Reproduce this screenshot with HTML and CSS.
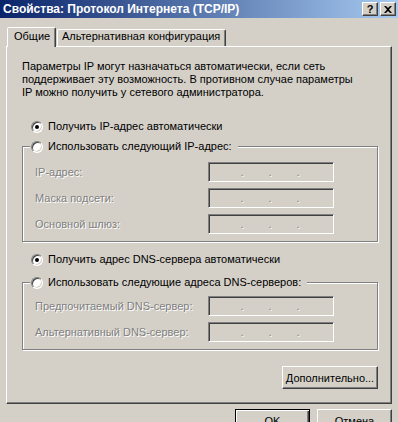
FILE: index.html
```html
<!DOCTYPE html>
<html lang="ru">

<head>
    <meta charset="UTF-8">
    <meta name="viewport" content="width=device-width, initial-scale=1.0">
    <title>Свойства: Протокол Интернета (TCP/IP)</title>
    <link rel="stylesheet" href="styles.css">
</head>

<body>
    <div class="window">
        <div class="titlebar">
            <span class="title">Свойства: Протокол Интернета (TCP/IP)</span>
            <div class="caption-buttons">
                <span class="caption-btn">?</span>
                <span class="caption-btn">
                    <svg width="8" height="7" viewBox="0 0 8 7">
                        <path d="M0 0h2l2 2 2-2h2L5 3.5 8 7H6L4 5 2 7H0l3-3.5z" fill="#000"/>
                    </svg>
                </span>
            </div>
        </div>

        <div class="dialog">
            <div class="tabs">
                <div class="tab active">Общие</div>
                <div class="tab second">Альтернативная конфигурация</div>
            </div>

            <div class="panel">
                <p class="intro">Параметры IP могут назначаться автоматически, если сеть<br>поддерживает эту возможность. В противном случае параметры<br>IP можно получить у сетевого администратора.</p>

                <div class="option first"><span class="radio checked"></span>Получить IP-адрес автоматически</div>

                <fieldset class="group ip-group">
                    <legend class="option"><span class="radio"></span>Использовать следующий IP-адрес:</legend>
                    <div class="fields">
                        <span class="label">IP-адрес:</span>
                        <div class="ip"><span class="dot">.</span><span class="dot">.</span><span class="dot">.</span></div>
                        <span class="label">Маска подсети:</span>
                        <div class="ip"><span class="dot">.</span><span class="dot">.</span><span class="dot">.</span></div>
                        <span class="label">Основной шлюз:</span>
                        <div class="ip"><span class="dot">.</span><span class="dot">.</span><span class="dot">.</span></div>
                    </div>
                </fieldset>

                <div class="option dns-auto"><span class="radio checked"></span>Получить адрес DNS-сервера автоматически</div>

                <fieldset class="group dns-group">
                    <legend class="option"><span class="radio"></span>Использовать следующие адреса DNS-серверов:</legend>
                    <div class="fields">
                        <span class="label">Предпочитаемый DNS-сервер:</span>
                        <div class="ip"><span class="dot">.</span><span class="dot">.</span><span class="dot">.</span></div>
                        <span class="label">Альтернативный DNS-сервер:</span>
                        <div class="ip"><span class="dot">.</span><span class="dot">.</span><span class="dot">.</span></div>
                    </div>
                </fieldset>

                <div class="advanced">
                    <button class="btn wide">Дополнительно...</button>
                </div>
            </div>

            <div class="dialog-buttons">
                <button class="btn default">OK</button>
                <button class="btn">Отмена</button>
            </div>
        </div>
    </div>
</body>

</html>
```

FILE: styles.css
```css
body {
    margin: 0;
    background-color: #d4d0c8;
    font-family: "Liberation Sans", Arial, sans-serif;
    font-size: 11px;
    color: #000;
}

.window {
    width: 398px;
    height: 422px;
    overflow: hidden;
}

/* заголовок окна */
.titlebar {
    height: 18px;
    display: flex;
    align-items: center;
    justify-content: space-between;
    padding: 0 2px 0 3px;
    background: linear-gradient(to right, #0a246a, #a6caf0);
}

.title {
    color: #fff;
    font-weight: bold;
    font-size: 12px;
}

.caption-buttons {
    display: flex;
    gap: 2px;
}

.caption-btn {
    width: 16px;
    height: 14px;
    box-sizing: border-box;
    display: flex;
    align-items: center;
    justify-content: center;
    background: #d4d0c8;
    border: 1px solid;
    border-color: #fff #404040 #404040 #fff;
    box-shadow: inset -1px -1px #808080;
    font-weight: bold;
    line-height: 12px;
}

.dialog {
    padding: 9px 6px 0;
}

/* вкладки */
.tabs {
    display: flex;
    align-items: flex-end;
    height: 19px;
    padding-left: 1px;
}

.tab {
    height: 16px;
    box-sizing: border-box;
    border: 1px solid;
    border-bottom: none;
    border-color: #fff #404040 transparent #fff;
    border-radius: 2px 2px 0 0;
    box-shadow: inset -1px 0 #808080;
    padding: 0 0 0 4px;
    line-height: 13px;
}

.tab.active {
    width: 49px;
    height: 20px;
    margin-bottom: -1px;
    padding: 2px 0 0 6px;
    position: relative;
    z-index: 1;
    background: #d4d0c8;
}

.tab.second {
    width: 169px;
    height: 17px;
    margin-left: 1px;
    padding-top: 0;
}

.panel {
    border: 1px solid;
    border-color: #fff #404040 #404040 #fff;
    box-shadow: inset -1px -1px #808080;
    padding: 13px 13px 14px 15px;
}

.intro {
    margin: 0;
    line-height: 13px;
}

.option {
    display: flex;
    align-items: center;
    height: 13px;
    line-height: 13px;
}

.option.first {
    margin-top: 21px;
    padding-left: 9px;
}

.option.dns-auto {
    margin-top: 11px;
    padding-left: 9px;
}

.radio {
    width: 12px;
    height: 12px;
    box-sizing: border-box;
    margin-right: 5px;
    display: flex;
    align-items: center;
    justify-content: center;
    border-radius: 50%;
    background: #fff;
    border: 1px solid;
    border-color: #808080 #fff #fff #808080;
    box-shadow: inset 1px 1px #404040, inset -1px -1px #d4d0c8;
}

.radio.checked::after {
    content: "";
    width: 4px;
    height: 4px;
    border-radius: 50%;
    background: #000;
}

/* рамки групп */
.group {
    margin: 7px 0 0;
    min-width: 0;
    border: 1px solid #808080;
    box-shadow: inset 1px 1px #fff, 1px 1px #fff;
    padding: 9px 0 7px 12px;
}

.dns-group {
    margin-top: 10px;
    padding-top: 7px;
}

.group legend {
    margin-left: -5px;
    padding: 0 6px 0 1px;
    background: #d4d0c8;
}

.fields {
    display: grid;
    grid-template-columns: 173px 126px;
    row-gap: 6px;
    align-items: center;
}

.label {
    color: #808080;
    text-shadow: 1px 1px #fff;
}

.ip {
    height: 20px;
    box-sizing: border-box;
    display: flex;
    align-items: center;
    padding-left: 31px;
    gap: 24px;
    border: 1px solid;
    border-color: #808080 #fff #fff #808080;
    box-shadow: inset 1px 1px #404040, inset -1px -1px #d4d0c8;
    color: #808080;
    text-shadow: 1px 1px #fff;
}

.dot {
    width: 4px;
    text-align: center;
}

/* кнопки */
.btn {
    width: 75px;
    height: 23px;
    padding: 0;
    font-family: inherit;
    font-size: 11px;
    color: #000;
    background: #d4d0c8;
    border: 1px solid;
    border-color: #fff #404040 #404040 #fff;
    box-shadow: inset -1px -1px #808080;
}

.btn.wide {
    width: 96px;
}

.btn.default {
    border: 1px solid #000;
    box-shadow: inset 1px 1px #fff, inset -1px -1px #404040, inset -2px -2px #808080;
}

.advanced {
    display: flex;
    justify-content: flex-end;
    margin-top: 16px;
}

.dialog-buttons {
    display: flex;
    justify-content: flex-end;
    gap: 7px;
    margin-top: 5px;
}
```
